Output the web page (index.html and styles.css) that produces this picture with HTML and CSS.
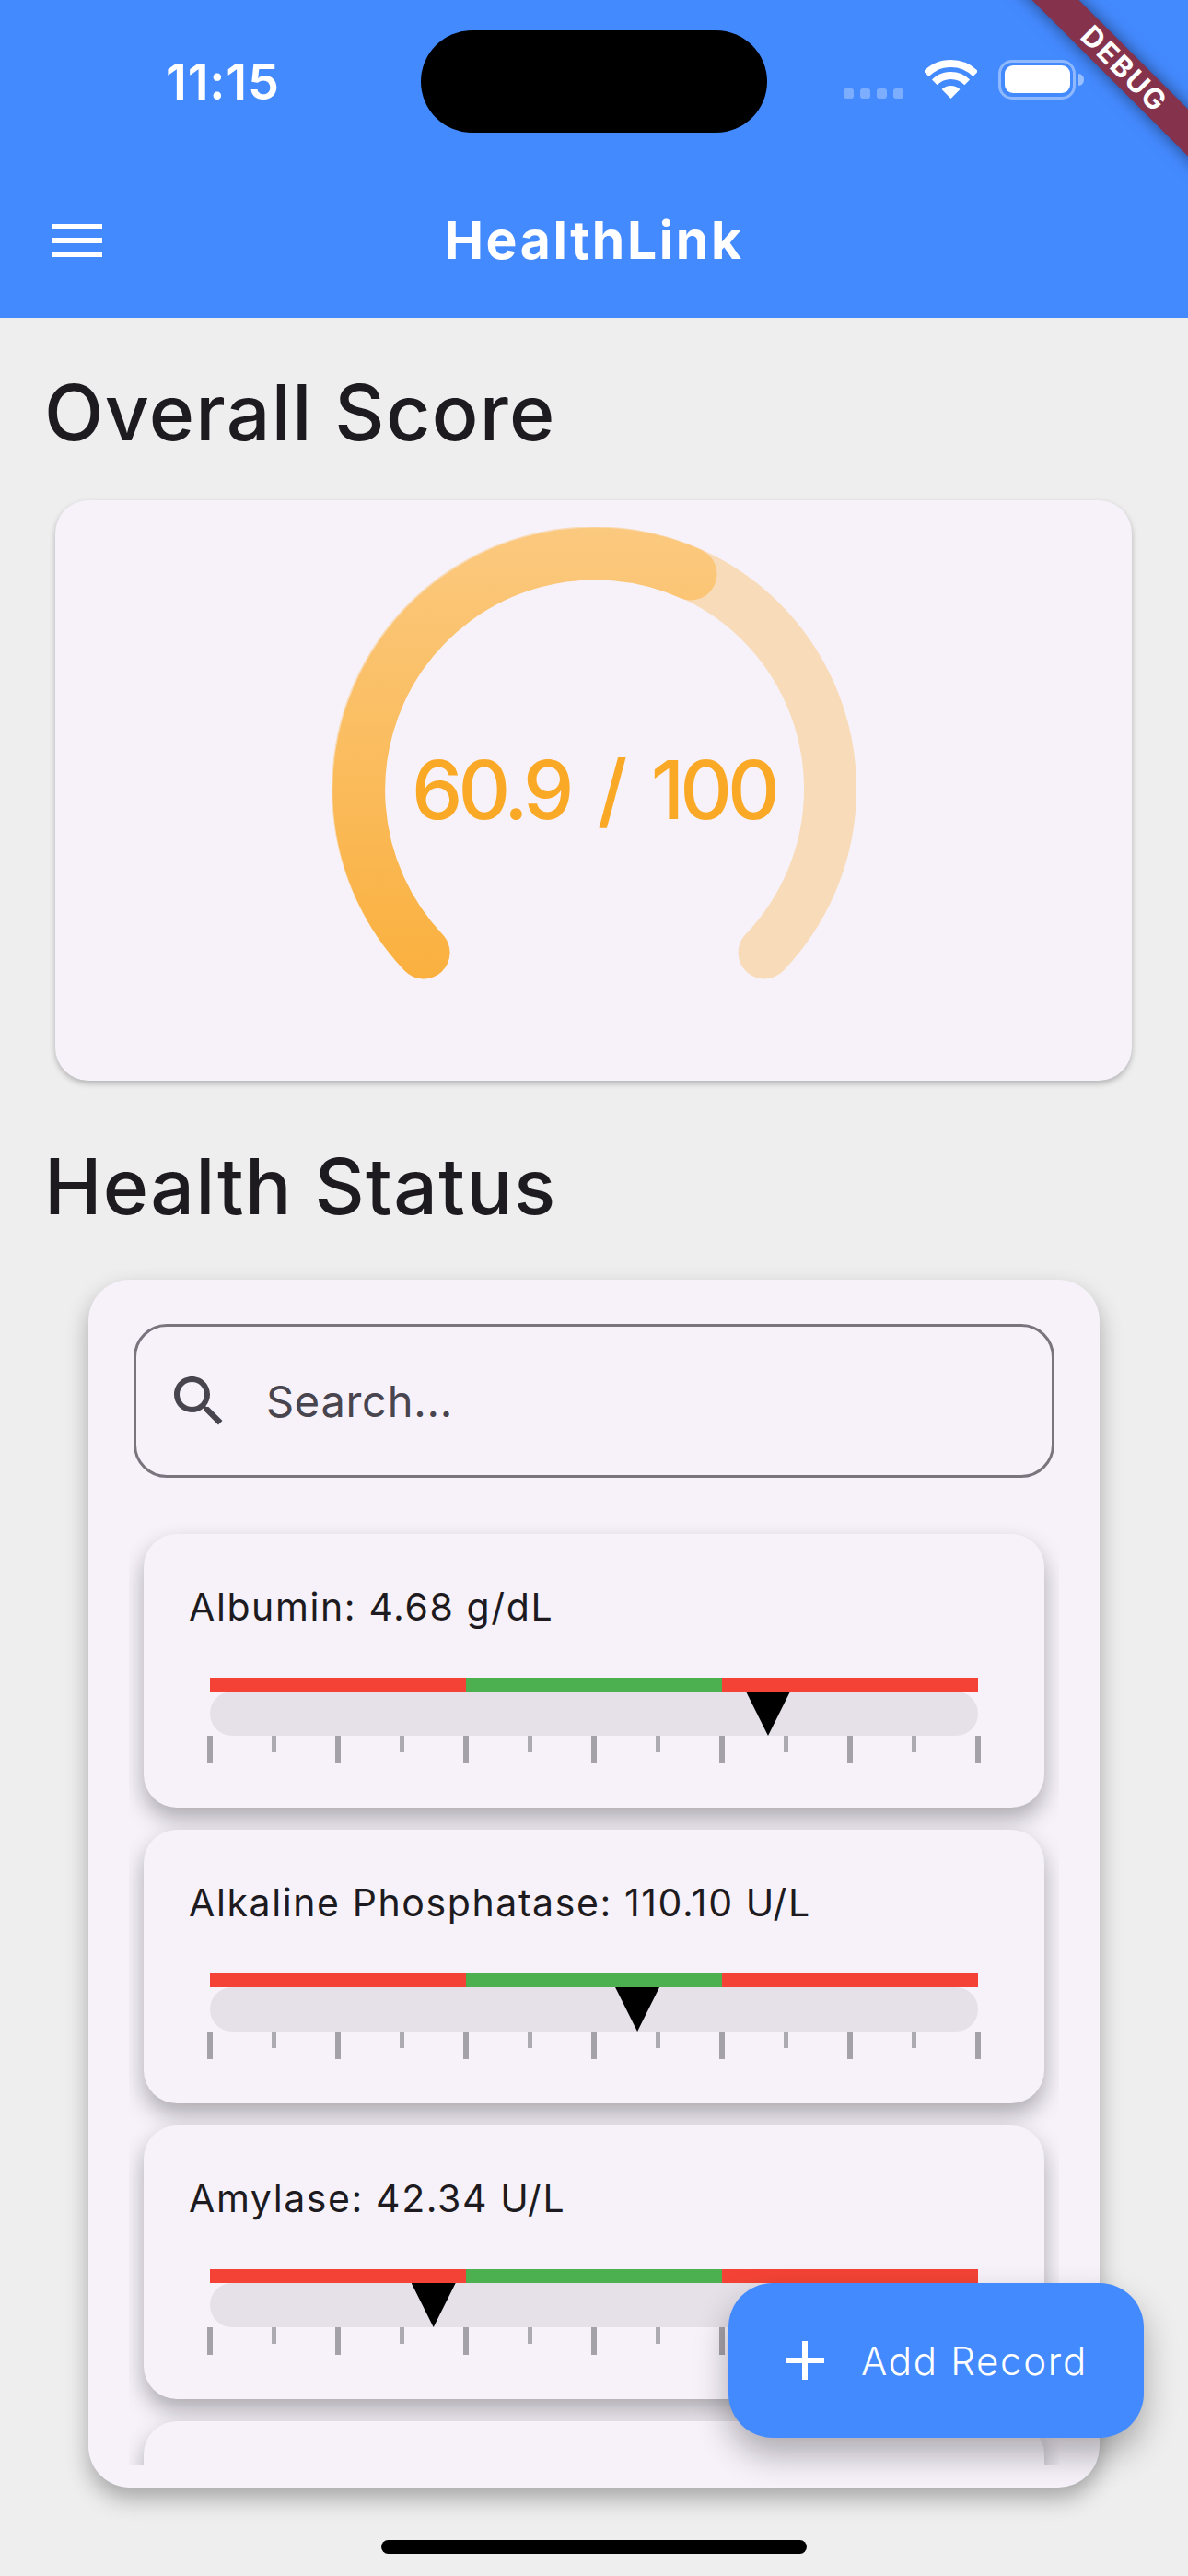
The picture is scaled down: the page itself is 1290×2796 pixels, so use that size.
FILE: index.html
```html
<!DOCTYPE html>
<html lang="en">
<head>
    <meta charset="UTF-8">
    <meta name="viewport" content="width=device-width, initial-scale=1.0">
    <title>HealthLink</title>
    <link rel="stylesheet" href="styles.css">
</head>
<body>

<header class="header">
    <div class="status-bar">
        <div class="time">11:15</div>
        <div class="notch"></div>
        <div class="status-icons">
            <div class="signal">
                <span></span><span></span><span></span><span></span>
            </div>
            <svg class="wifi" width="57" height="42" viewBox="0 0 57 42">
                <path d="M1.63 15.13A38 38 0 0 1 55.37 15.13" fill="none" stroke="#fff" stroke-width="8"/>
                <path d="M10.82 24.32A25 25 0 0 1 46.18 24.32" fill="none" stroke="#fff" stroke-width="8"/>
                <path d="M28.5 42L18.6 32.1A14 14 0 0 1 38.4 32.1Z" fill="#fff"/>
            </svg>
            <div class="battery"><div class="battery-level"></div></div>
            <div class="battery-cap"></div>
        </div>
    </div>
    <div class="app-bar">
        <svg class="menu-icon" width="54" height="36" viewBox="0 0 54 36">
            <rect width="54" height="6" fill="#fff"/>
            <rect y="15" width="54" height="6" fill="#fff"/>
            <rect y="30" width="54" height="6" fill="#fff"/>
        </svg>
        <h1 class="app-title">HealthLink</h1>
    </div>
</header>

<main class="content">
    <h2 class="section-title">Overall Score</h2>
    <section class="score-card">
        <div class="gauge">
            <svg width="570" height="495" viewBox="0 0 570 495">
                <defs>
                    <linearGradient id="gaugeFill" gradientUnits="userSpaceOnUse" x1="0" y1="0" x2="0" y2="495">
                        <stop offset="0" stop-color="#fbc97f"/>
                        <stop offset="1" stop-color="#fab03e"/>
                    </linearGradient>
                </defs>
                <path d="M100 462A256.5 256.5 0 1 1 470 462" fill="none" stroke="#f8dcba" stroke-width="57" stroke-linecap="round"/>
                <path d="M100 462A256.5 256.5 0 0 1 390 51" fill="none" stroke="url(#gaugeFill)" stroke-width="57" stroke-linecap="round"/>
            </svg>
            <div class="gauge-value">60.9 / 100</div>
        </div>
    </section>

    <h2 class="section-title section-title-second">Health Status</h2>
    <section class="status-card">
        <div class="search-box">
            <svg class="search-icon" width="72" height="72" viewBox="0 0 24 24">
                <path fill="#49454f" d="M15.5 14h-.79l-.28-.27C15.41 12.59 16 11.11 16 9.5 16 5.91 13.09 3 9.5 3S3 5.91 3 9.5 5.91 16 9.5 16c1.61 0 3.09-.59 4.23-1.57l.27.28v.79l5 4.99L20.49 19l-4.99-5zm-6 0C7.01 14 5 11.99 5 9.5S7.01 5 9.5 5 14 7.01 14 9.5 11.99 14 9.5 14z"/>
            </svg>
            <span class="search-text">Search...</span>
        </div>

        <div class="metric-list">
            <div class="metric-card">
                <div class="metric-label">Albumin: 4.68 g/dL</div>
                <div class="slider">
                    <div class="ranges"><span class="bad"></span><span class="good"></span><span class="bad"></span></div>
                    <div class="track"><div class="pointer" style="left: 72.66%"></div></div>
                    <div class="ticks">
                        <i class="tick"></i><i class="tick minor"></i><i class="tick"></i><i class="tick minor"></i><i class="tick"></i><i class="tick minor"></i><i class="tick"></i><i class="tick minor"></i><i class="tick"></i><i class="tick minor"></i><i class="tick"></i><i class="tick minor"></i><i class="tick"></i>
                    </div>
                </div>
            </div>

            <div class="metric-card">
                <div class="metric-label">Alkaline Phosphatase: 110.10 U/L</div>
                <div class="slider">
                    <div class="ranges"><span class="bad"></span><span class="good"></span><span class="bad"></span></div>
                    <div class="track"><div class="pointer" style="left: 55.64%"></div></div>
                    <div class="ticks">
                        <i class="tick"></i><i class="tick minor"></i><i class="tick"></i><i class="tick minor"></i><i class="tick"></i><i class="tick minor"></i><i class="tick"></i><i class="tick minor"></i><i class="tick"></i><i class="tick minor"></i><i class="tick"></i><i class="tick minor"></i><i class="tick"></i>
                    </div>
                </div>
            </div>

            <div class="metric-card">
                <div class="metric-label">Amylase: 42.34 U/L</div>
                <div class="slider">
                    <div class="ranges"><span class="bad"></span><span class="good"></span><span class="bad"></span></div>
                    <div class="track"><div class="pointer" style="left: 29.1%"></div></div>
                    <div class="ticks">
                        <i class="tick"></i><i class="tick minor"></i><i class="tick"></i><i class="tick minor"></i><i class="tick"></i><i class="tick minor"></i><i class="tick"></i><i class="tick minor"></i><i class="tick"></i><i class="tick minor"></i><i class="tick"></i><i class="tick minor"></i><i class="tick"></i>
                    </div>
                </div>
            </div>

            <!-- next card is cut off by the list, only its top shows -->
            <div class="metric-card"></div>
        </div>
    </section>
</main>

<button class="fab">
    <svg width="72" height="72" viewBox="0 0 24 24"><path fill="#fff" d="M19 13h-6v6h-2v-6H5v-2h6V5h2v6h6v2z"/></svg>
    <span>Add Record</span>
</button>

<div class="home-indicator"></div>
<div class="debug-banner">DEBUG</div>

</body>
</html>
```

FILE: styles.css
```css
* {
    box-sizing: border-box;
}
body {
    font-family: Inter, "Noto Sans", sans-serif;
    background-color: #eeeeee;
    color: #1d1b20;
    margin: 0;
    width: 1290px;
    height: 2796px;
    overflow: hidden;
    position: relative;
}

/* header */
.header {
    height: 345px;
    background-color: #448aff;
    color: white;
}
.status-bar {
    display: flex;
    align-items: center;
    height: 144px;
    padding-top: 33px;
}
.time {
    width: 277px;
    margin-left: 180px;
    font-size: 54px;
    font-weight: 600;
    letter-spacing: 0.8px;
}
.notch {
    width: 376px;
    height: 111px;
    border-radius: 56px;
    background-color: black;
}
.status-icons {
    display: flex;
    align-items: flex-end;
    margin-left: 83px;
    margin-top: -5px;
}
.signal {
    display: flex;
    gap: 7px;
    margin-right: 23px;
    margin-bottom: 1px;
}
.signal span {
    width: 11px;
    height: 11px;
    border-radius: 3px;
    background-color: rgba(255, 255, 255, 0.3);
}
.wifi {
    display: block;
    margin-right: 23px;
    margin-bottom: 1px;
}
.battery {
    width: 84px;
    height: 43px;
    padding: 3.5px;
    border: 3.5px solid rgba(255, 255, 255, 0.4);
    border-radius: 15px;
}
.battery-level {
    height: 100%;
    border-radius: 9px;
    background-color: white;
}
.battery-cap {
    width: 6px;
    height: 13px;
    margin-left: 3px;
    margin-bottom: 15px;
    border-radius: 0 6px 6px 0;
    background-color: rgba(255, 255, 255, 0.45);
}
.app-bar {
    display: grid;
    grid-template-columns: 1fr auto 1fr;
    align-items: center;
    height: 201px;
    padding-top: 33px;
}
.menu-icon {
    margin-left: 57px;
}
.app-title {
    margin: 0;
    font-size: 57px;
    font-weight: 700;
    letter-spacing: 2.6px;
    line-height: 1.2;
}

/* page */
.content {
    padding: 0 48px;
}
.section-title {
    margin: 0;
    height: 198px;
    padding-top: 53px;
    font-size: 84px;
    font-weight: 500;
    line-height: 100px;
    letter-spacing: 1.3px;
}
.score-card {
    height: 630px;
    margin: 0 13px 0 12px;
    padding-top: 29px;
    border-radius: 36px;
    background-color: #f7f2fa;
    box-shadow: 0 3px 6px rgba(0, 0, 0, 0.25);
}
.gauge {
    display: grid;
    justify-content: center;
}
.gauge svg,
.gauge-value {
    grid-area: 1 / 1;
}
.gauge-value {
    margin-top: 235px;
    text-align: center;
    font-size: 88px;
    font-weight: 500;
    line-height: 100px;
    letter-spacing: -5px;
    word-spacing: 12px;
    color: #faa926;
}
.section-title-second {
    height: 216px;
    padding-top: 65px;
}

/* health status */
.status-card {
    display: flex;
    flex-direction: column;
    height: 1311px;
    margin: 0 48px;
    padding: 48px 44px 24px;
    border-radius: 45px;
    background-color: #f7f2fa;
    box-shadow: 0 12px 24px rgba(0, 0, 0, 0.3);
}
.search-box {
    display: flex;
    align-items: center;
    flex-shrink: 0;
    height: 167px;
    margin: 0 5px;
    padding-left: 32px;
    border: 3px solid #79747e;
    border-radius: 36px;
}
.search-text {
    margin-left: 37px;
    font-size: 47px;
    letter-spacing: 0.7px;
    color: #49454f;
}
.metric-list {
    flex: 1;
    min-height: 0;
    margin-top: 36px;
    padding: 25px 16px 0;
    overflow: hidden;
}
.metric-card {
    height: 297px;
    margin-bottom: 24px;
    padding: 61px 49px 0;
    border-radius: 36px;
    background-color: #f7f2fa;
    box-shadow: 0 12px 24px rgba(0, 0, 0, 0.3);
}
.metric-label {
    height: 95px;
    font-size: 41px;
    letter-spacing: 1.6px;
    line-height: 36px;
}
.slider {
    margin: 0 23px;
}
.ranges {
    display: flex;
    height: 15px;
}
.ranges span {
    flex: 1;
}
.bad {
    background-color: #f44336;
}
.good {
    background-color: #4caf50;
}
.track {
    position: relative;
    height: 48px;
    border-radius: 24px;
    background-color: #e6e0e9;
}
.pointer {
    position: absolute;
    top: 0;
    width: 48px;
    height: 48px;
    transform: translateX(-50%);
    clip-path: polygon(0 0, 100% 0, 50% 100%);
    background-color: black;
}
.ticks {
    display: flex;
    justify-content: space-between;
    align-items: flex-start;
    margin: 0 -3px;
}
.tick {
    width: 6px;
    height: 30px;
    background-color: #a5a1a8;
}
.tick.minor {
    width: 4.5px;
    height: 18px;
    margin: 0 0.75px;
    background-color: #aeaab1;
}

/* floating bits */
.fab {
    position: absolute;
    left: 791px;
    top: 2478px;
    display: flex;
    align-items: center;
    width: 451px;
    height: 168px;
    padding: 0 0 0 47px;
    border: none;
    border-radius: 48px;
    background-color: #448aff;
    color: white;
    font-family: Inter, sans-serif;
    font-size: 42px;
    font-weight: 300;
    letter-spacing: 1.7px;
    box-shadow: 0 18px 36px rgba(0, 0, 0, 0.3);
}
.fab span {
    margin-left: 25px;
}
.home-indicator {
    position: absolute;
    left: 414px;
    top: 2757px;
    width: 462px;
    height: 15px;
    border-radius: 8px;
    background-color: black;
}
.debug-banner {
    position: absolute;
    left: 1068px;
    top: 54px;
    width: 300px;
    height: 36px;
    padding-left: 8px;
    transform: rotate(45deg);
    background-color: #85324d;
    box-shadow: 0 0 18px rgba(0, 0, 0, 0.5);
    color: white;
    text-align: center;
    font-size: 31px;
    font-weight: 700;
    letter-spacing: 2px;
    line-height: 36px;
}
```
